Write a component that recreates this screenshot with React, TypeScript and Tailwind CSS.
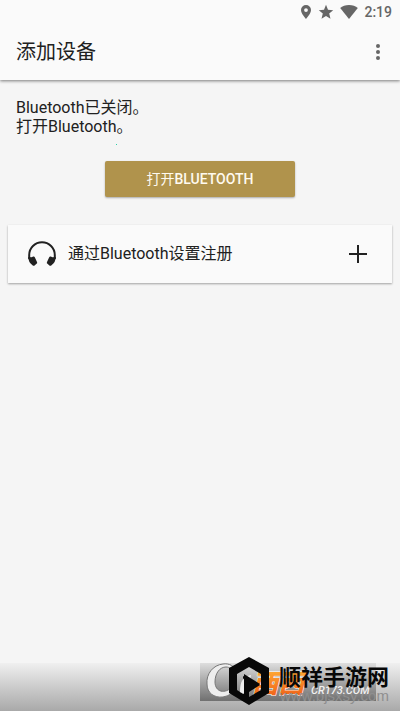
import { useState } from 'react';

function StatusBar() {
  return (
    <div className="flex h-6 items-center justify-end pr-2 text-[#666]">
      <svg className="mr-1.5 h-4 w-3" viewBox="0 0 12 16" fill="currentColor" aria-hidden="true">
        <path
          fillRule="evenodd"
          d="M6 1a5 5 0 0 0-5 5c0 3.600 5 9 5 9s5-5.400 5-9a5 5 0 0 0-5-5Zm0 3.200a1.900 1.900 0 1 1 0 3.800 1.900 1.900 0 0 1 0-3.800Z"
        />
      </svg>
      <svg className="mr-1.5 h-4 w-4" viewBox="0 0 16 16" fill="currentColor" aria-hidden="true">
        <path d="m8 .8 2 5 5.200.4-4 3.400 1.300 5.200L8 12l-4.500 2.800 1.300-5.200-4-3.400L6 5.800Z" />
      </svg>
      <svg className="mr-1.5 h-4 w-[18px]" viewBox="0 0 18 16" fill="currentColor" aria-hidden="true">
        <path d="M9 1C5.500 1 2.300 2.200.2 4L9 15l8.800-11C15.700 2.200 12.500 1 9 1Z" />
      </svg>
      <time className="text-sm font-medium">2:19</time>
    </div>
  );
}

function Header() {
  return (
    <header className="relative bg-[#fafafa] shadow-[0_1px_3px_rgba(0,0,0,0.5)]">
      <StatusBar />
      <div className="flex h-14 items-center justify-between px-4">
        <h1 className="text-xl text-[#212121]">添加设备</h1>
        <button type="button" aria-label="更多" className="flex h-6 w-3 items-center justify-center text-[#666]">
          <svg className="h-4 w-1" viewBox="0 0 4 16" fill="currentColor" aria-hidden="true">
            <circle cx="2" cy="2" r="2" />
            <circle cx="2" cy="8" r="2" />
            <circle cx="2" cy="14" r="2" />
          </svg>
        </button>
      </div>
    </header>
  );
}

function HeadphonesIcon() {
  return (
    <svg className="h-7 w-7 shrink-0" viewBox="0 0 28 28" aria-hidden="true">
      <path d="M1.200 19V15a12.800 12.800 0 0 1 25.600 0v4" fill="none" stroke="#212121" strokeWidth="2" />
      <path
        d="M.2 17 3.500 17.300l1.800-.8q1-.4 1.500.7l2.300 5q.4 1-.6 1.500l-2.200 2q-1 .5-1.800-.5Q.2 22 .2 17ZM27.800 17l-3.300.3-1.800-.8q-1-.4-1.500.7l-2.300 5q-.4 1 .6 1.500l2.200 2q1 .5 1.800-.5 4.300-3.200 4.300-8.200Z"
        fill="#212121"
      />
    </svg>
  );
}

function Watermark() {
  return (
    <footer className="relative h-12 bg-linear-to-b from-[#f0f0f0] to-[#a9a9a9]">
      <div className="absolute top-0 right-[24px] h-[38px] w-[176px] bg-linear-to-b from-[#dedede] to-[#707070]" />
      <svg className="absolute right-0 bottom-0 h-[60px] w-[200px]" viewBox="200 651 200 60" aria-hidden="true">
        <defs>
          <linearGradient id="orange" x1="0" y1="0" x2="0" y2="1">
            <stop offset="0" stopColor="#ffad35" />
            <stop offset="1" stopColor="#ee5a16" />
          </linearGradient>
        </defs>
        <path
          d="M236 672c-1-6-7-9-13-8-10 1-17 10-16 20 0 9 7 14 16 13 6-1 10-4 13-8l-3-3c-8 9-18 6-18-4 0-9 5-15 11-15 4 0 5 2 6 6Z"
          fill="#eee"
          stroke="#777"
        />
        <text x="252" y="693" fontSize="26" fontWeight="900" fontStyle="italic" fill="url(#orange)" stroke="#fff" strokeWidth="1" paintOrder="stroke">
          西西
        </text>
        <text x="280" y="701" fontFamily="Liberation Sans" fontSize="15" fill="#8f8f8f">
          www.bjsxsy.com
        </text>
        <text x="311" y="694" fontSize="11" fontWeight="500" fontStyle="italic" fill="#f2f2f2">
          CR173.COM
        </text>
        <path
          fill="#080808"
          fillRule="evenodd"
          d="m249 657 20 11v25l-20 12-20-12v-25Zm0 10-12 7v16l6 4v-18l17 9-11 7v5l12-7v-16Z"
        />
        <path d="M240 692c0-11 3-15 11-17l-1 5c-5 1-6 5-6 14Z" fill="#eee" />
        <path d="m244 674 16 10-16 10Z" fill="#080808" />
        <text x="279" y="685" fontSize="22" fontWeight="700" fill="#080808">
          顺祥手游网
        </text>
      </svg>
    </footer>
  );
}

export default function App() {
  const [enabled, setEnabled] = useState(false);

  return (
    <div className="flex min-h-screen flex-col bg-[#f5f5f5] font-[Roboto,'Noto_Sans_CJK_SC',sans-serif] text-[#212121]">
      <Header />
      <main className="flex flex-1 flex-col px-2 pt-[18px]">
        <p className="px-2 text-base leading-[19px]">
          Bluetooth已关闭。
          <br />
          打开Bluetooth。
        </p>
        <div className="flex h-[25px] px-[108px] pt-2">
          <span className="size-px bg-[#2fd0a8]" />
        </div>
        <button
          type="button"
          aria-pressed={enabled}
          onClick={() => setEnabled(!enabled)}
          className="h-9 min-w-[190px] self-center rounded-xs bg-[#b0934c] text-sm text-[#fffaf0] shadow-[0_1px_2px_rgba(0,0,0,0.3)]"
        >
          打开<span className="font-medium">BLUETOOTH</span>
        </button>
        <button
          type="button"
          className="mt-7 flex h-[58px] items-center bg-[#fafafa] px-5 text-left shadow-[0_1px_2px_rgba(0,0,0,0.35)]"
        >
          <HeadphonesIcon />
          <span className="ml-3 flex-1 text-base">通过Bluetooth设置注册</span>
          <svg className="mr-1 h-5 w-5" viewBox="0 0 20 20" aria-hidden="true">
            <path d="M10 1v18M1 10h18" stroke="#212121" strokeWidth="2" />
          </svg>
        </button>
      </main>
      <Watermark />
    </div>
  );
}
